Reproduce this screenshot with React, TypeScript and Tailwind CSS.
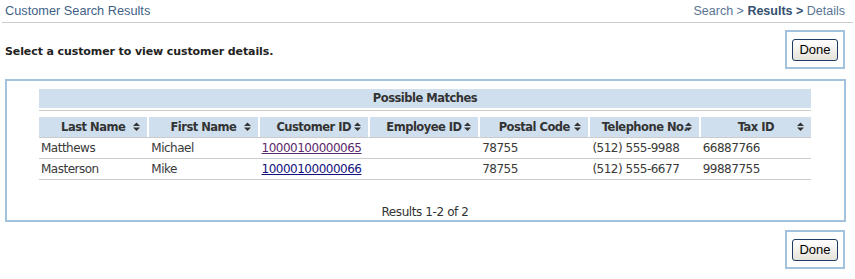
import React from "react";

const cols = [
  "Last Name",
  "First Name",
  "Customer ID",
  "Employee ID",
  "Postal Code",
  "Telephone No.",
  "Tax ID",
];

const rows = [
  { last: "Matthews", first: "Michael", id: "10000100000065", visited: true, postal: "78755", phone: "(512) 555-9988", tax: "66887766" },
  { last: "Masterson", first: "Mike", id: "10000100000066", visited: false, postal: "78755", phone: "(512) 555-6677", tax: "99887755" },
];

function SortIcon() {
  return (
    <svg width="7" height="10" viewBox="0 0 7 10" className="absolute right-[7px] top-[5px]">
      <path d="M3.5 0.5 L7 4 H0 Z" fill="#333" />
      <path d="M0 5.5 H7 L3.5 9 Z" fill="#333" />
    </svg>
  );
}

function DoneBox() {
  return (
    <div className="w-[60px] h-[39px] border-2 border-[#a3c2de] flex items-center justify-center">
      <button className="h-[22px] px-[6px] rounded-[3px] border border-[#1d3b63] bg-gradient-to-b from-white to-[#e6e3da] text-[13px] text-black leading-none font-['Liberation_Sans',sans-serif]">
        Done
      </button>
    </div>
  );
}

export default function App() {
  return (
    <div className="w-[855px] h-[279px] bg-white text-[#333] font-['DejaVu_Sans',sans-serif] text-[11px]">
      <div className="mx-[2px] h-[23px] flex items-center justify-between pl-[3px] pr-[8px] border-b border-[#cccccc] font-['Liberation_Sans',sans-serif]">
        <span className="text-[12.75px] text-[#3f5f86]">Customer Search Results</span>
        <span className="text-[12.5px] text-[#587592]">
          Search &gt; <b className="text-[#34506e]">Results &gt;</b> Details
        </span>
      </div>
      <div className="flex items-start justify-between pl-[5px] pr-[10px] pt-[7px]">
        <span className="mt-[14px] text-[11px] font-bold text-[#222] tracking-[-0.1px]">Select a customer to view customer details.</span>
        <DoneBox />
      </div>
      <div className="ml-[5px] mt-[10px] w-[841px] h-[143px] border-2 border-[#a3c2de] pt-[8px] pl-[32px]">
        <div className="w-[772px]">
          <div className="h-[19px] bg-[#cfdfee] flex items-center justify-center font-bold text-[11.5px] tracking-[-0.5px] text-[#333]">
            Possible Matches
          </div>
          <div className="mt-[2px] h-px bg-[#cccccc]" />
          <div className="mt-[6px] grid grid-cols-7 border-b border-[#cccccc]">
            {cols.map((c, i) => (
              <div
                key={c}
                className={`relative h-[20px] pt-px bg-[#cfdfee] flex items-center justify-center font-bold text-[11.5px] tracking-[-0.5px] text-[#333] ${i < 6 ? "border-r-2 border-white" : ""}`}
              >
                {c}
                <SortIcon />
              </div>
            ))}
          </div>
          {rows.map((r) => (
            <div key={r.id} className="grid grid-cols-7 h-[21px] items-center border-b border-[#cccccc] text-[12px] tracking-[-0.5px] text-[#3a3a3a]">
              <span className="pl-[2px]">{r.last}</span>
              <span className="pl-[2px]">{r.first}</span>
              <span className="pl-[2px]">
                <a href="#" className={`underline ${r.visited ? "text-[#5a2a6e]" : "text-[#13137f]"}`}>{r.id}</a>
              </span>
              <span />
              <span className="pl-[2px]">{r.postal}</span>
              <span className="pl-[2px]">{r.phone}</span>
              <span className="pl-[2px]">{r.tax}</span>
            </div>
          ))}
        </div>
        <div className="w-[772px] mt-[23px] text-center text-[12px] tracking-[-0.4px] text-[#333]">Results 1-2 of 2</div>
      </div>
      <div className="flex justify-end pr-[10px] mt-[8px]">
        <DoneBox />
      </div>
    </div>
  );
}
